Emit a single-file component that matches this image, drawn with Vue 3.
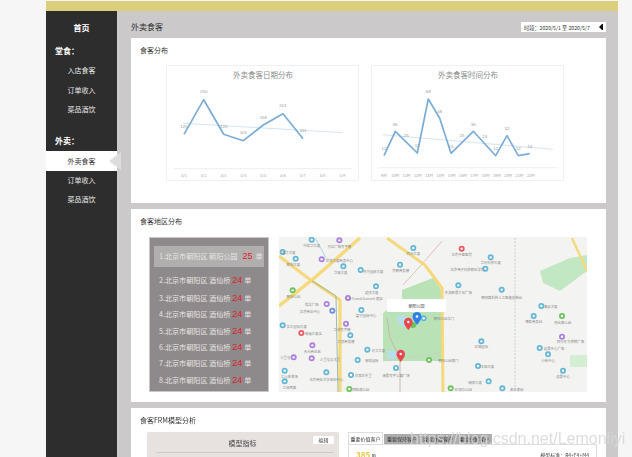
<script setup>
const nav1 = ['入店食客', '订单收入', '菜品酒饮']
const nav2 = [
  { t: '外卖食客', on: true },
  { t: '订单收入', on: false },
  { t: '菜品酒饮', on: false }
]
const pts = a => a.map(p => p.join(',')).join(' ')
const chart1 = {
  title: '外卖食客日期分布', view: '167 66 191 114', tx: 263,
  line: pts([[184, 134.3], [203.7, 99.7], [223.7, 134.3], [243.3, 140.7], [263.3, 125], [283, 113.7], [303, 138.7]]),
  trend: '183.3,123.3 342.7,132.7',
  axis: { x1: 174, x2: 352.7, y: 168.7 },
  labels: [[184, 128.3, '120'], [203.7, 93, '250'], [223.7, 128.3, '120'], [243.3, 134, '105'], [263.3, 118.7, '158'], [283, 107.3, '201'], [303, 132, '111']],
  ticks: ['5/1', '5/2', '5/3', '5/4', '5/5', '5/6', '5/7', '5/8', '5/9'].map((s, i) => [184 + i * 19.8, s])
}
const chart2 = {
  title: '外卖食客时间分布', view: '372 66 191 114', tx: 468,
  line: pts([[384, 155.7], [395.3, 131.3], [417.3, 153], [428.3, 99], [439.7, 118.3], [451, 153.3], [473.3, 131.3], [495.7, 155.7], [507, 135.7], [518.3, 155.7], [529.7, 153.7]]),
  trend: '382.7,134.7 552.7,149.3',
  axis: { x1: 379, x2: 557, y: 167.7 },
  labels: [[384, 150, '12'], [395, 125.5, '36'], [406.3, 136.5, '25'], [417.3, 146.5, '15'], [428.3, 93, '68'], [439.7, 113, '48'], [451, 148, '14'], [462, 136.5, '25'], [473.3, 125.5, '36'], [484.7, 138, '24'], [495.7, 150, '12'], [507, 130, '32'], [518.3, 150, '12'], [529.7, 148, '14']],
  ticks: [9, 10, 11, 12, 13, 14, 15, 16, 17, 18, 19, 20, 21, 22].map((h, i) => [384 + i * 11.3, h + '时'])
}
const charts = [chart1, chart2]

const rows = [
  { a: '1.北京市朝阳区 朝阳公园', n: 25 },
  { a: '2.北京市朝阳区 酒仙桥', n: 24 },
  { a: '3.北京市朝阳区 酒仙桥', n: 24 },
  { a: '4.北京市朝阳区 酒仙桥', n: 24 },
  { a: '5.北京市朝阳区 酒仙桥', n: 24 },
  { a: '6.北京市朝阳区 酒仙桥', n: 24 },
  { a: '7.北京市朝阳区 酒仙桥', n: 24 },
  { a: '8.北京市朝阳区 酒仙桥', n: 24 }
]

const C = { t: '#62b7d4', p: '#ab7fdc', g: '#6cc25c', r: '#e85a60', b: '#6e8cd8' }
const L = (x, y, c, label, lx, ly) => ({ x: 130 + x / 3, y: 228 + y / 3, c: C[c], label, lx: 130 + lx / 3, ly: 228 + ly / 3 })
const R = (x, y, c, label, lx, ly) => ({ x: 380 + x / 3, y: 228 + y / 3, c: C[c], label, lx: 380 + lx / 3, ly: 228 + ly / 3 })
const pois = [
  L(545, 35, 't', '中信华大厦', 545, 52), L(628, 37, 'p', '万达广场写字楼', 628, 56), L(458, 72, 't', '富华大厦', 476, 75),
  L(497, 92, 't', '朝阳大厦', 490, 109), L(575, 94, 'p', '世贸大厦商务中心', 628, 97), L(640, 115, 't', '华瑞大厦', 632, 133),
  L(692, 126, 't', '东方国际大厦', 730, 130), L(738, 175, 't', '远洋大厦', 725, 193), L(488, 187, 'g', '朝阳公园', 490, 206),
  L(590, 228, 'p', '信达广场', 545, 230), L(607, 248, 'b', '北京商业中心', 540, 251), L(654, 210, 'p', 'The Grand Summit 酒店', 702, 212),
  L(694, 246, 't', '嘉宁国际中心', 708, 264), L(458, 292, 't', '北大国际大厦', 500, 295), L(514, 315, 'r', '瑞福大厦店', 550, 318),
  L(648, 287, 'p', '华茂写字楼', 636, 306), L(661, 322, 't', '华贸商务楼', 648, 340), L(547, 352, 'p', '天元商业区', 547, 370),
  L(712, 365, 't', '光华大厦', 745, 368), L(491, 388, 'p', '三里屯', 466, 390), L(545, 391, 'p', '三里屯太古里', 600, 394),
  L(683, 396, 't', '瑞城国际', 725, 399), L(464, 428, 't', '工人体育场', 478, 446), L(464, 460, 't', '工体西路', 478, 479),
  L(589, 433, 't', '北京商业大学培训中心', 589, 456), L(663, 441, 't', '白家庄东里', 700, 444), L(658, 483, 'g', '团结湖公园', 692, 486),
  R(100, 60, 't', '四元大厦', 100, 78), R(245, 62, 'r', '北京中医医院', 245, 80), R(332, 88, 't', '华光科技大厦', 332, 105),
  R(60, 110, 't', '京朝商务楼', 62, 128), R(316, 122, 't', '北京电子科技职业学院', 262, 124), R(235, 172, 't', '东润枫景文化广场', 235, 195),
  R(365, 185, 't', '朝阳路科技人工智能创新园', 365, 208), R(484, 234, 't', '青云大厦', 512, 236), R(461, 264, 't', '博泰商务园', 461, 282),
  R(546, 264, 'g', '将台路公园', 548, 283), R(546, 326, 'p', '四方东方购物广场', 572, 342), R(131, 271, 't', '朝阳公园北门', 192, 273),
  R(304, 340, 't', '正瑞国际', 304, 357), R(479, 360, 't', '远景中心广场', 522, 362), R(504, 379, 't', '小街中心', 504, 397),
  R(147, 396, 'g', '朝阳公园南门', 205, 398), R(294, 414, 't', '丰田大厦', 322, 416), R(326, 460, 't', '瑞琪大厦', 285, 463),
  R(549, 428, 't', '远景中心', 549, 445), R(212, 481, 'g', '红领巾公园', 250, 484), R(367, 481, 't', '燕北家园', 410, 484),
  R(48, 420, 't', '瑞景写字公寓广场', 48, 443)
]
</script>

<template>
  <div class="page">
    <div class="frame">
      <div class="topbar"></div>
      <div class="body">
        <aside class="side">
          <div class="home">首页</div>
          <div class="group g1">堂食：</div>
          <ul class="list l1">
            <li v-for="t in nav1" :key="t" class="item">{{ t }}</li>
          </ul>
          <div class="group g2">外卖：</div>
          <ul class="list l2">
            <li v-for="n in nav2" :key="n.t" class="item" :class="{ active: n.on }">{{ n.t }}</li>
          </ul>
        </aside>
        <main class="main">
          <header class="head">
            <h1 class="h1">外卖食客</h1>
            <div class="period">
              <span>时段：2020/5/1 至 2020/5/7</span>
              <svg width="4" height="6" viewBox="0 0 4 6"><path d="M0 3 L3 0 V6 Z" fill="#111" /><rect x="3" y="0" width="1" height="6" fill="#111" /></svg>
            </div>
          </header>

          <section class="card c1">
            <h2 class="ct">食客分布</h2>
            <div class="charts">
              <svg v-for="c in charts" :key="c.title" class="chart" :viewBox="c.view" width="191" height="114">
                <text :x="c.tx" y="77.5" class="ctitle" text-anchor="middle">{{ c.title }}</text>
                <line :x1="c.axis.x1" :x2="c.axis.x2" :y1="c.axis.y" :y2="c.axis.y" stroke="#e6e6e6" stroke-width="0.7" />
                <polyline :points="c.trend" fill="none" stroke="#d3e5f0" stroke-width="1" />
                <polyline :points="c.line" fill="none" stroke="#7cadd6" stroke-width="1.7" stroke-linejoin="round" />
                <text v-for="l in c.labels" :key="l[0]" :x="l[0]" :y="l[1]" class="vlabel" text-anchor="middle">{{ l[2] }}</text>
                <text v-for="t in c.ticks" :key="t[0]" :x="t[0]" y="176.5" class="tick" text-anchor="middle">{{ t[1] }}</text>
              </svg>
            </div>
          </section>

          <section class="card c2">
            <h2 class="ct">食客地区分布</h2>
            <div class="geo">
              <ol class="rank">
                <li v-for="(r, i) in rows" :key="i" class="rrow" :class="{ top: i === 0, second: i === 1 }">
                  <span>{{ r.a }}</span><b class="num">{{ r.n }}</b><span>单</span>
                </li>
              </ol>
              <svg class="map" viewBox="279 237 308 155" width="308" height="155">
                <rect x="279" y="237" width="308" height="155" fill="#f3f3f1" />
                <path d="M402 290 L433 278 L442 291 L442 361 L383 361 L383 313 L402 300 Z" fill="#b9e2b6" />
                <path d="M540 271 L570 258 L587 255 L587 271 L560 291 L543 283 Z" fill="#c2e7c3" />
                <rect x="570" y="355" width="17" height="12" fill="#d3eed3" />
                <path d="M397 316 Q405 314 411 320 Q413 328 404 327 Q396 324 397 316 Z" fill="#b8deea" />
                <path d="M387 351 Q396 349 399 354 Q396 360 388 359 Z" fill="#b8deea" />
                <path d="M315 238 Q322 250 326 258" fill="none" stroke="#a9d8e8" stroke-width="1" />
                <polyline points="515,238 515,392" fill="none" stroke="#c4c8c8" stroke-width="0.8" stroke-dasharray="2 1.5" />
                <polyline points="442,241 423,263 403,285" fill="none" stroke="#d9bdb4" stroke-width="0.9" />
                <polyline points="387,318 390,338 400,358 400,392" fill="none" stroke="#c9b3ac" stroke-width="0.9" />
                <polyline points="279,306 312,280 360,238" fill="none" stroke="#f5d97a" stroke-width="3.4" />
                <polyline points="279,256 312,281 340,300 340,392" fill="none" stroke="#f5d97a" stroke-width="3.2" />
                <polyline points="312,281 336,296 338,392" fill="none" stroke="#8fb3ab" stroke-width="0.9" />
                <polyline points="387,238 425,265 442,288 443,392" fill="none" stroke="#f5d97a" stroke-width="3" />
                <polyline points="572,238 587,271" fill="none" stroke="#f5d97a" stroke-width="2.4" />
                <line x1="440" y1="353" x2="383" y2="361" stroke="#c9c9c9" stroke-width="0.5" />
                <g v-for="(p, i) in pois" :key="i">
                  <circle :cx="p.x" :cy="p.y" r="3" :fill="p.c" />
                  <circle :cx="p.x" :cy="p.y" r="1.2" fill="#fff" />
                  <text :x="p.lx" :y="p.ly + 1.4" class="plabel" text-anchor="middle">{{ p.label }}</text>
                </g>
                <circle cx="413" cy="325" r="3" fill="#6cc25c" />
                <path d="M417 325 C413 320 412.5 318 412.5 316.5 A4.5 4.5 0 0 1 421.5 316.5 C421.5 318 421 320 417 325 Z" fill="#2f80e8" />
                <path d="M408.4 330 C404.6 325.5 404 323.5 404 322 A4.2 4.2 0 0 1 412.6 322 C412.6 323.5 412 325.5 408.4 330 Z" fill="#e8484e" />
                <path d="M400.7 362 C397 357.5 396.5 355.5 396.5 354 A4.2 4.2 0 0 1 405 354 C405 355.5 404.4 357.5 400.7 362 Z" fill="#e8484e" />
                <circle cx="417" cy="316.5" r="1.3" fill="#fff" />
                <circle cx="408.3" cy="322" r="1.2" fill="#fff" />
                <circle cx="400.7" cy="354" r="1.2" fill="#fff" />
                <rect x="387" y="299" width="59" height="13" fill="#fff" />
                <text x="416.5" y="307.5" class="plabel dark" text-anchor="middle">朝阳公园</text>
              </svg>
            </div>
          </section>

          <section class="card c3">
            <h2 class="ct">食客FRM模型分析</h2>
            <div class="frm">
              <div class="model">
                <div class="mhead">
                  <span class="mt">模型指标</span>
                  <button class="edit">编辑</button>
                </div>
              </div>
              <div class="tabsbox">
                <div class="tabs">
                  <span class="tab on">重要价值客户</span>
                  <span class="tab">重要保持客户</span>
                  <span class="tab">重要发展客户</span>
                  <span class="tab">重要挽留客户</span>
                </div>
                <div class="tabbody">
                  <span class="count"><b>385</b> 单</span>
                  <span class="std">模型标准：R4+F4+M4</span>
                </div>
              </div>
            </div>
          </section>
        </main>
      </div>
      <svg class="pointer" width="12" height="20" viewBox="0 0 12 20"><path d="M0 10 L12 1 V19 Z" fill="#dedddd" /></svg>
    </div>
    <div class="wm">https://blog.csdn.net/Lemonliyi</div>
  </div>
</template>

<style scoped>
.page {
  position: relative;
  width: 632px;
  height: 457px;
  overflow: hidden;
  background: #f6f6f6;
  font-family: "Noto Sans CJK SC", "Liberation Sans", sans-serif;
}
.frame {
  position: relative;
  width: 572px;
  height: 457px;
  margin-left: 46px;
  padding-top: 1px;
  box-sizing: border-box;
  filter: blur(0.6px);
}
.topbar { height: 10px; background: #dccf7c; }
.body { display: flex; height: 446px; }
.side {
  width: 71px;
  flex: none;
  background: #2d2d2d;
  color: #fff;
  padding-top: 7px;
  box-sizing: border-box;
}
.home { height: 20px; line-height: 20px; text-align: center; font-size: 8px; font-weight: 700; }
.group { height: 14px; line-height: 14px; font-size: 8px; font-weight: 700; padding-left: 9px; }
.g1 { margin-top: 6px; }
.g2 { margin-top: 14px; }
.list { list-style: none; margin: 0; padding: 0; }
.l1 { margin-top: 3px; }
.l2 { margin-top: 3px; }
.item { height: 19.5px; line-height: 19.5px; text-align: center; font-size: 7px; color: #e8e8e8; }
.active { height: 20px; line-height: 20px; background: #fff; color: #333; }
.main {
  flex: 1;
  background: #cbc9ca;
  padding: 11px 12px 0 14px;
  box-sizing: border-box;
  min-width: 0;
}
.head { display: flex; justify-content: space-between; align-items: center; height: 10px; margin-bottom: 6px; }
.h1 { margin: 0; font-size: 8px; font-weight: 400; color: #333; line-height: 14px; }
.period {
  display: flex;
  align-items: center;
  justify-content: space-between;
  width: 85px;
  height: 10px;
  box-sizing: border-box;
  padding: 0 3px;
  background: #fff;
  font-size: 5.2px;
  color: #333;
  white-space: nowrap;
}
.card { background: #fff; margin-bottom: 6px; padding: 7px 9px; box-sizing: border-box; }
.c1 { height: 165px; }
.c2 { height: 193px; }
.c3 { height: 60px; }
.ct { margin: 0; font-size: 7px; line-height: 10px; font-weight: 400; color: #333; }
.charts { display: flex; gap: 14px; margin: 11px 0 0 27px; }
.chart { display: block; flex: none; outline: 0.7px solid #eef0f2; outline-offset: -0.7px; }
.ctitle { font-size: 7.5px; fill: #8c8c8c; }
.vlabel { font-size: 4.4px; fill: #9a9a9a; font-family: "Liberation Sans", sans-serif; }
.tick { font-size: 3.8px; fill: #a6a6a6; }
.geo { display: flex; gap: 10px; margin: 11px 0 0 9px; }
.rank {
  list-style: none;
  width: 120px;
  height: 155px;
  margin: 0;
  padding: 8px 4px 0;
  box-sizing: border-box;
  background: #8e898a;
  border: 0.7px solid #c9c7c7;
  flex: none;
}
.rrow {
  display: flex;
  align-items: center;
  height: 16.3px;
  padding-left: 5px;
  font-size: 7.1px;
  color: #e6e3e3;
  white-space: nowrap;
}
.top { height: 20.6px; background: #b1aeae; margin-bottom: 5px; }
.second { margin-bottom: 2px; }
.num { font-size: 9px; font-weight: 400; color: #e3202c; margin: 0 2px; line-height: 10px; font-family: "Liberation Sans", sans-serif; }
.top .num { margin: 0 3px 0 5px; }
.map { display: block; flex: none; }
.plabel { font-size: 3.4px; fill: #8a8a8a; }
.dark { fill: #444; font-size: 4px; }
.frm { display: flex; gap: 9px; margin: 7px 0 0 7px; }
.model { width: 192px; height: 40px; flex: none; background: #e7e2df; border-radius: 2px; padding: 4px 5px 0 9px; box-sizing: border-box; }
.mhead { position: relative; display: flex; justify-content: center; height: 16px; border-bottom: 0.7px solid #cfc8c6; }
.mt { font-size: 7px; line-height: 14px; color: #444; margin-right: 5px; }
.edit {
  position: absolute;
  right: 0;
  top: 0;
  width: 21px;
  height: 8px;
  padding: 0;
  border: 0;
  border-radius: 1px;
  background: #fff;
  color: #444;
  font: 5px/8px "Noto Sans CJK SC", sans-serif;
}
.tabsbox { width: 249px; flex: none; }
.tabs { display: flex; align-items: flex-end; height: 12px; }
.tab {
  width: 36px;
  height: 10px;
  line-height: 10px;
  text-align: center;
  background: #aeadad;
  color: #333;
  font-size: 5px;
  white-space: nowrap;
  overflow: hidden;
}
.tab.on { width: 35px; height: 12px; line-height: 12px; background: #fff; border: 0.6px solid #ddd; border-bottom: 0; box-sizing: border-box; margin-right: 1px; }
.tabbody {
  display: flex;
  justify-content: space-between;
  height: 30px;
  border: 0.7px solid #ddd;
  padding: 4px 7px;
  box-sizing: border-box;
  font-size: 5px;
  line-height: 11px;
  color: #444;
}
.count b { color: #e9c83f; font-size: 8px; }
.pointer { position: absolute; left: 63px; top: 151px; }
.wm {
  position: absolute;
  left: 410px;
  top: 429px;
  font-family: "Liberation Sans", sans-serif;
  font-size: 16px;
  line-height: 20px;
  color: rgba(215, 215, 215, 0.85);
  white-space: nowrap;
}
</style>
